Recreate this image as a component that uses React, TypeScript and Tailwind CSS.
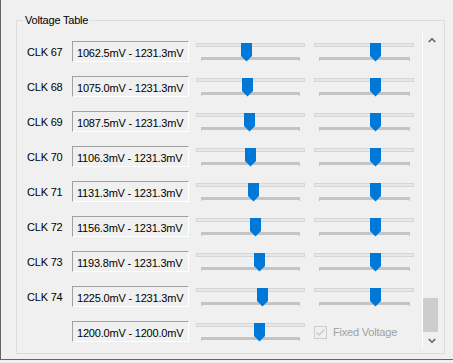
import React from 'react';

type Row = { clk: string; volts: string; thumb: number; fixed?: boolean };

const rows: Row[] = [
  { clk: 'CLK 67', volts: '1062.5mV - 1231.3mV', thumb: 241 },
  { clk: 'CLK 68', volts: '1075.0mV - 1231.3mV', thumb: 242 },
  { clk: 'CLK 69', volts: '1087.5mV - 1231.3mV', thumb: 244 },
  { clk: 'CLK 70', volts: '1106.3mV - 1231.3mV', thumb: 245 },
  { clk: 'CLK 71', volts: '1131.3mV - 1231.3mV', thumb: 248 },
  { clk: 'CLK 72', volts: '1156.3mV - 1231.3mV', thumb: 250 },
  { clk: 'CLK 73', volts: '1193.8mV - 1231.3mV', thumb: 254 },
  { clk: 'CLK 74', volts: '1225.0mV - 1231.3mV', thumb: 257 },
  { clk: '', volts: '1200.0mV - 1200.0mV', thumb: 254, fixed: true },
];

const Thumb = () => (
  <svg width="11" height="19" viewBox="0 0 11 19">
    <path d="M0 0 H11 V13 L5.5 18.5 L0 13 Z" fill="#0078d7" />
  </svg>
);

// win10 style trackbar: channel, blue thumb, dense tick strip underneath
const TrackBar = ({ width, tickInset, tickWidth, thumbLeft }: { width: number; tickInset: number; tickWidth: number; thumbLeft: number }) => (
  <div className="relative mt-[2px] shrink-0" style={{ width }}>
    <div className="mt-[6px] h-[4px] border border-[#d6d6d6] bg-[#e7e7e7]" />
    <div className="mt-[10px] flex items-start" style={{ marginLeft: tickInset, width: tickWidth }}>
      <div className="h-[4px] w-px bg-[#c4c4c4]" />
      <div className="h-[3px] flex-1 bg-[#c4c4c4]" />
      <div className="h-[4px] w-px bg-[#c4c4c4]" />
    </div>
    <div className="absolute top-0" style={{ left: thumbLeft }}>
      <Thumb />
    </div>
  </div>
);

const ScrollBar = () => (
  <div className="flex h-full w-[18px] shrink-0 flex-col border-l border-white">
    <div className="flex h-[17px] items-center justify-center">
      <svg width="8" height="6" viewBox="0 0 8 6">
        <path d="M0.8 5 L4 1.8 L7.2 5" fill="none" stroke="#606060" strokeWidth="1.6" />
      </svg>
    </div>
    <div className="flex flex-1 flex-col justify-end">
      <div className="h-[34px] w-[15px] bg-[#cdcdcd]" />
    </div>
    <div className="flex h-[17px] items-center justify-center">
      <svg width="8" height="6" viewBox="0 0 8 6">
        <path d="M0.8 1 L4 4.2 L7.2 1" fill="none" stroke="#606060" strokeWidth="1.6" />
      </svg>
    </div>
  </div>
);

export default function App() {
  return (
    <div className="h-[363px] w-[453px] bg-[#f0f0f0] font-['Liberation_Sans',Arial,sans-serif] text-[11px] leading-[13px] tracking-[-0.2px] text-black">
      <div className="h-[360px] border-b border-l border-[#646464] pt-[20px]">
        <div className="relative ml-[15px] h-[334px] w-[429px] border border-[#dcdcdc]">
          <span className="absolute left-[6px] top-[-7px] bg-[#f0f0f0] px-[2px]">Voltage Table</span>

          <div className="mt-[10px] flex h-[318px]">
            <div className="w-[405px] overflow-hidden pt-[6px]">
              {rows.map((r) => (
                <div key={r.volts + r.clk} className="flex h-[35px] items-start">
                  <div className="mt-[9px] w-[55px] shrink-0 pl-[10px]">{r.clk}</div>
                  <div className="mt-[4px] h-[21px] w-[117px] shrink-0 border-b border-l border-r border-t border-b-white border-l-[#a0a0a0] border-r-white border-t-[#a0a0a0] pl-[4px] pt-[5px]">
                    {r.volts}
                  </div>
                  <div className="ml-[7px]">
                    <TrackBar width={109} tickInset={5} tickWidth={99} thumbLeft={r.thumb - 196} />
                  </div>
                  {r.fixed ? (
                    <div className="ml-[9px] flex items-start">
                      <div className="mt-[9px] h-[13px] w-[13px] border border-[#cccccc] bg-[#f0f0f0]">
                        <svg width="11" height="11" viewBox="0 0 11 11">
                          <path d="M1.5 5.5 L4 8 L9.5 2.5" fill="none" stroke="#c4c4c4" strokeWidth="1.2" />
                        </svg>
                      </div>
                      <div className="ml-[6px] mt-[9px] text-[#a0a0a0]">Fixed Voltage</div>
                    </div>
                  ) : (
                    <div className="ml-[9px]">
                      <TrackBar width={100} tickInset={5} tickWidth={91} thumbLeft={56} />
                    </div>
                  )}
                </div>
              ))}
            </div>
            <ScrollBar />
          </div>
        </div>
      </div>
    </div>
  );
}
